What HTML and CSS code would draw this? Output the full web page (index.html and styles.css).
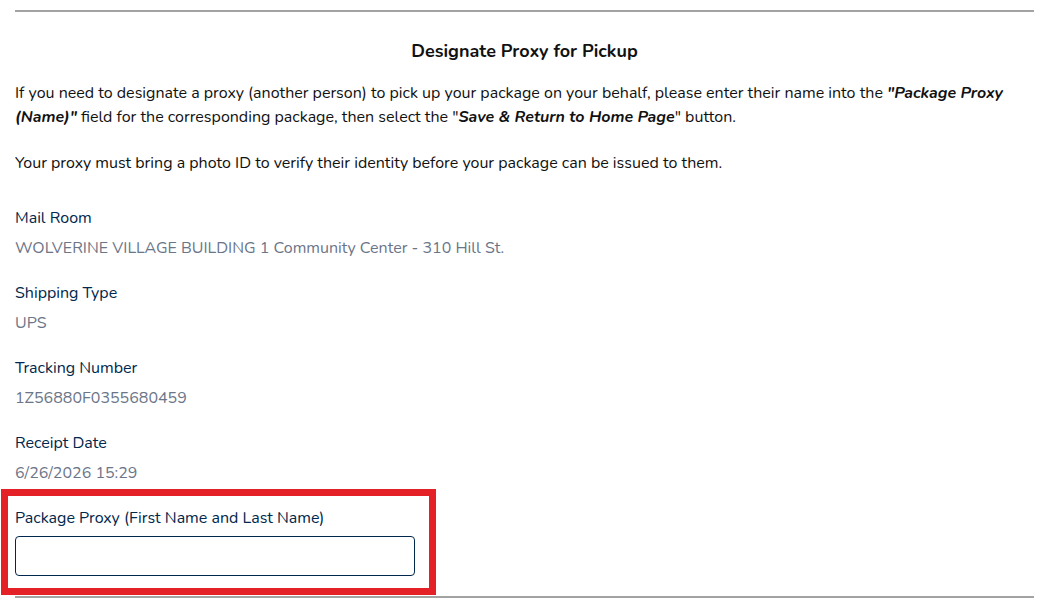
FILE: index.html
```html
<!DOCTYPE html>
<html lang="en">
<head>
    <meta charset="UTF-8">
    <meta name="viewport" content="width=device-width, initial-scale=1.0">
    <title>Designate Proxy for Pickup</title>
    <link rel="stylesheet" href="styles.css">
</head>
<body>
    <div class="container">
        <hr class="divider">
        <h2 class="title">Designate Proxy for Pickup</h2>
        <p class="intro">If you need to designate a proxy (another person) to pick up your package on your behalf, please enter their name into the <b><i>"Package Proxy (Name)"</i></b> field for the corresponding package, then select the "<b><i>Save &amp; Return to Home Page</i></b>" button.</p>
        <p class="intro">Your proxy must bring a photo ID to verify their identity before your package can be issued to them.</p>

        <div class="field">
            <div class="field-label">Mail Room</div>
            <div class="field-value">WOLVERINE VILLAGE BUILDING 1 Community Center - 310 Hill St.</div>
        </div>
        <div class="field">
            <div class="field-label">Shipping Type</div>
            <div class="field-value">UPS</div>
        </div>
        <div class="field">
            <div class="field-label">Tracking Number</div>
            <div class="field-value">1Z56880F0355680459</div>
        </div>
        <div class="field">
            <div class="field-label">Receipt Date</div>
            <div class="field-value">6/26/2026 15:29</div>
        </div>

        <div class="proxy-box">
            <label for="proxyName" class="field-label">Package Proxy (First Name and Last Name)</label>
            <input type="text" id="proxyName" class="proxy-input">
        </div>
        <hr class="divider bottom">
    </div>
</body>
</html>
```

FILE: styles.css
```css
body {
    font-family: "Nunito", "Lato", "Open Sans", sans-serif;
    font-size: 16px;
    color: #111;
    background-color: #fff;
    margin: 0;
    padding: 0;
}
.container {
    padding: 0 15px;
}
.divider {
    border: none;
    border-top: 2px solid #a3a3a3;
    margin: 10px 0 0 0;
}
.divider.bottom {
    margin-top: 1px;
}
.title {
    font-size: 18px;
    font-weight: bold;
    text-align: center;
    margin: 27px 0 0 0;
    line-height: 24px;
}
.intro {
    line-height: 24px;
    margin: 18px 0 0 0;
}
.intro + .intro {
    margin-top: 22px;
}
.field {
    margin-top: 21px;
}
.intro + .field {
    margin-top: 31px;
}
.field-label {
    display: block;
    color: #00274c;
    line-height: 24px;
}
.field-value {
    color: #6b7588;
    line-height: 24px;
    margin-top: 6px;
}
.proxy-box {
    border: 7px solid #e42127;
    margin: 4px 0 0 -14px;
    padding: 10px 14px 12px 7px;
    width: 400px;
}
.proxy-input {
    display: block;
    width: 400px;
    height: 40px;
    box-sizing: border-box;
    margin-top: 6px;
    border: 1px solid #00274c;
    border-radius: 4px;
    font-family: inherit;
    font-size: 16px;
}
```
